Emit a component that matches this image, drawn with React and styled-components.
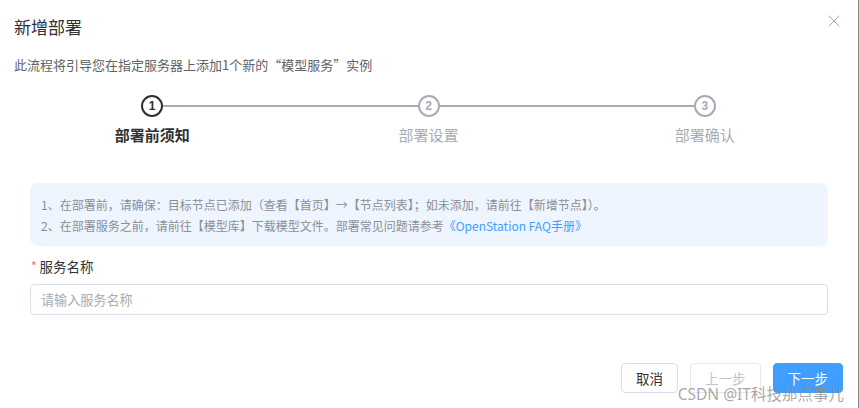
import React from "react";
import styled, { createGlobalStyle } from "styled-components";
import { X } from "lucide-react";

const GlobalStyle = createGlobalStyle`
  body {
    margin: 0;
    background: #fff;
    font-family: "Noto Sans CJK SC", "Noto Sans", sans-serif;
  }
`;

const Dialog = styled.div`
  position: relative;
  width: 859px;
  height: 408px;
  box-sizing: border-box;
  padding: 0 14px 0 14px;
  border-right: 1px solid #8a8a8a;
  display: flex;
  flex-direction: column;
  overflow: hidden;
`;

const Header = styled.div`
  display: flex;
  justify-content: space-between;
  align-items: flex-start;
  padding-top: 11px;
`;

const Title = styled.div`
  padding-top: 4px;
  font-size: 17px;
  line-height: 24px;
  color: #303133;
`;

const Close = styled.button`
  border: none;
  background: none;
  padding: 0;
  margin: 0;
  width: 20px;
  height: 20px;
  color: #a0a3a9;
  display: flex;
`;

const Subtitle = styled.div`
  margin-top: 16px;
  font-size: 13px;
  line-height: 20px;
  color: #606266;
`;

const Steps = styled.div`
  margin-top: 20px;
  display: grid;
  grid-template-columns: repeat(3, 1fr);
  margin-right: 1px;
`;

const Step = styled.div`
  display: flex;
  flex-direction: column;
  align-items: center;
`;

const StepHead = styled.div`
  display: flex;
  align-items: center;
  width: 100%;
`;

const Line = styled.div`
  flex: 1;
  height: 2px;
  background: ${(p) => (p.$hidden ? "transparent" : "#a8abb2")};
`;

const Icon = styled.div`
  width: 22px;
  height: 22px;
  box-sizing: border-box;
  border-radius: 50%;
  border: 2px solid ${(p) => (p.$active ? "#303133" : "#a8abb2")};
  color: ${(p) => (p.$active ? "#303133" : "#a8abb2")};
  font-family: "Liberation Sans", sans-serif;
  font-weight: bold;
  font-size: 12px;
  display: flex;
  align-items: center;
  justify-content: center;
`;

const StepTitle = styled.div`
  margin-top: 8px;
  font-size: 15px;
  line-height: 20px;
  font-weight: ${(p) => (p.$active ? 700 : 400)};
  color: ${(p) => (p.$active ? "#303133" : "#a8abb2")};
`;

const Body = styled.div`
  padding: 0 16px;
`;

const Alert = styled.div`
  margin-top: 38px;
  background: #eef5ff;
  border-radius: 8px;
  padding: 11px 12px 10px 11px;
  font-size: 12px;
  line-height: 21px;
  color: #8c8f96;
`;

const Link = styled.a`
  color: #409eff;
  text-decoration: none;
`;

const Label = styled.div`
  margin-top: 10px;
  font-size: 13.5px;
  line-height: 20px;
  color: #303133;
  display: flex;
  align-items: center;
`;

const Star = styled.span`
  color: #f56c6c;
  font-size: 12px;
  margin: 0 3px 0 1px;
`;

const Input = styled.input`
  display: block;
  margin-top: 8px;
  width: 100%;
  height: 31px;
  box-sizing: border-box;
  border: 1px solid #dcdfe6;
  border-radius: 4px;
  padding: 0 10px;
  font-family: inherit;
  font-size: 13.1px;
  color: #303133;
  outline: none;

  &::placeholder {
    color: #a8abb2;
  }
`;

const Footer = styled.div`
  margin-top: 48px;
  display: flex;
  justify-content: flex-end;
  gap: 12px;
  margin-right: 1px;
`;

const Button = styled.button`
  height: 30px;
  padding: 0 14px;
  border-radius: 4px;
  font-family: inherit;
  font-size: 13.5px;
  box-sizing: border-box;
  border: 1px solid
    ${(p) => (p.$primary ? "#409eff" : p.disabled ? "#e4e7ed" : "#dcdfe6")};
  background: ${(p) => (p.$primary ? "#409eff" : "#fff")};
  color: ${(p) => (p.$primary ? "#fff" : p.disabled ? "#c0c4cc" : "#303133")};
`;

const Watermark = styled.div`
  position: absolute;
  right: 14px;
  bottom: 3px;
  font-family: "Noto Sans", "Noto Sans CJK SC", sans-serif;
  font-size: 15.5px;
  color: rgba(140, 140, 140, 0.75);
  pointer-events: none;
`;

const steps = ["部署前须知", "部署设置", "部署确认"];

export default function App() {
  return (
    <>
      <GlobalStyle />
      <Dialog>
        <Header>
          <Title>新增部署</Title>
          <Close>
            <X size={20} strokeWidth={1.2} />
          </Close>
        </Header>
        <Subtitle>此流程将引导您在指定服务器上添加1个新的“模型服务”实例</Subtitle>
        <Steps>
          {steps.map((s, i) => (
            <Step key={s}>
              <StepHead>
                <Line $hidden={i === 0} />
                <Icon $active={i === 0}>{i + 1}</Icon>
                <Line $hidden={i === steps.length - 1} />
              </StepHead>
              <StepTitle $active={i === 0}>{s}</StepTitle>
            </Step>
          ))}
        </Steps>
        <Body>
          <Alert>
            <div>1、在部署前，请确保：目标节点已添加（查看【首页】→【节点列表】；如未添加，请前往【新增节点】）。</div>
            <div>
              2、在部署服务之前，请前往【模型库】下载模型文件。部署常见问题请参考
              <Link href="#">《OpenStation FAQ手册》</Link>
            </div>
          </Alert>
          <Label>
            <Star>*</Star>服务名称
          </Label>
          <Input placeholder="请输入服务名称" />
        </Body>
        <Footer>
          <Button>取消</Button>
          <Button disabled>上一步</Button>
          <Button $primary>下一步</Button>
        </Footer>
        <Watermark>CSDN @IT科技那点事儿</Watermark>
      </Dialog>
    </>
  );
}
